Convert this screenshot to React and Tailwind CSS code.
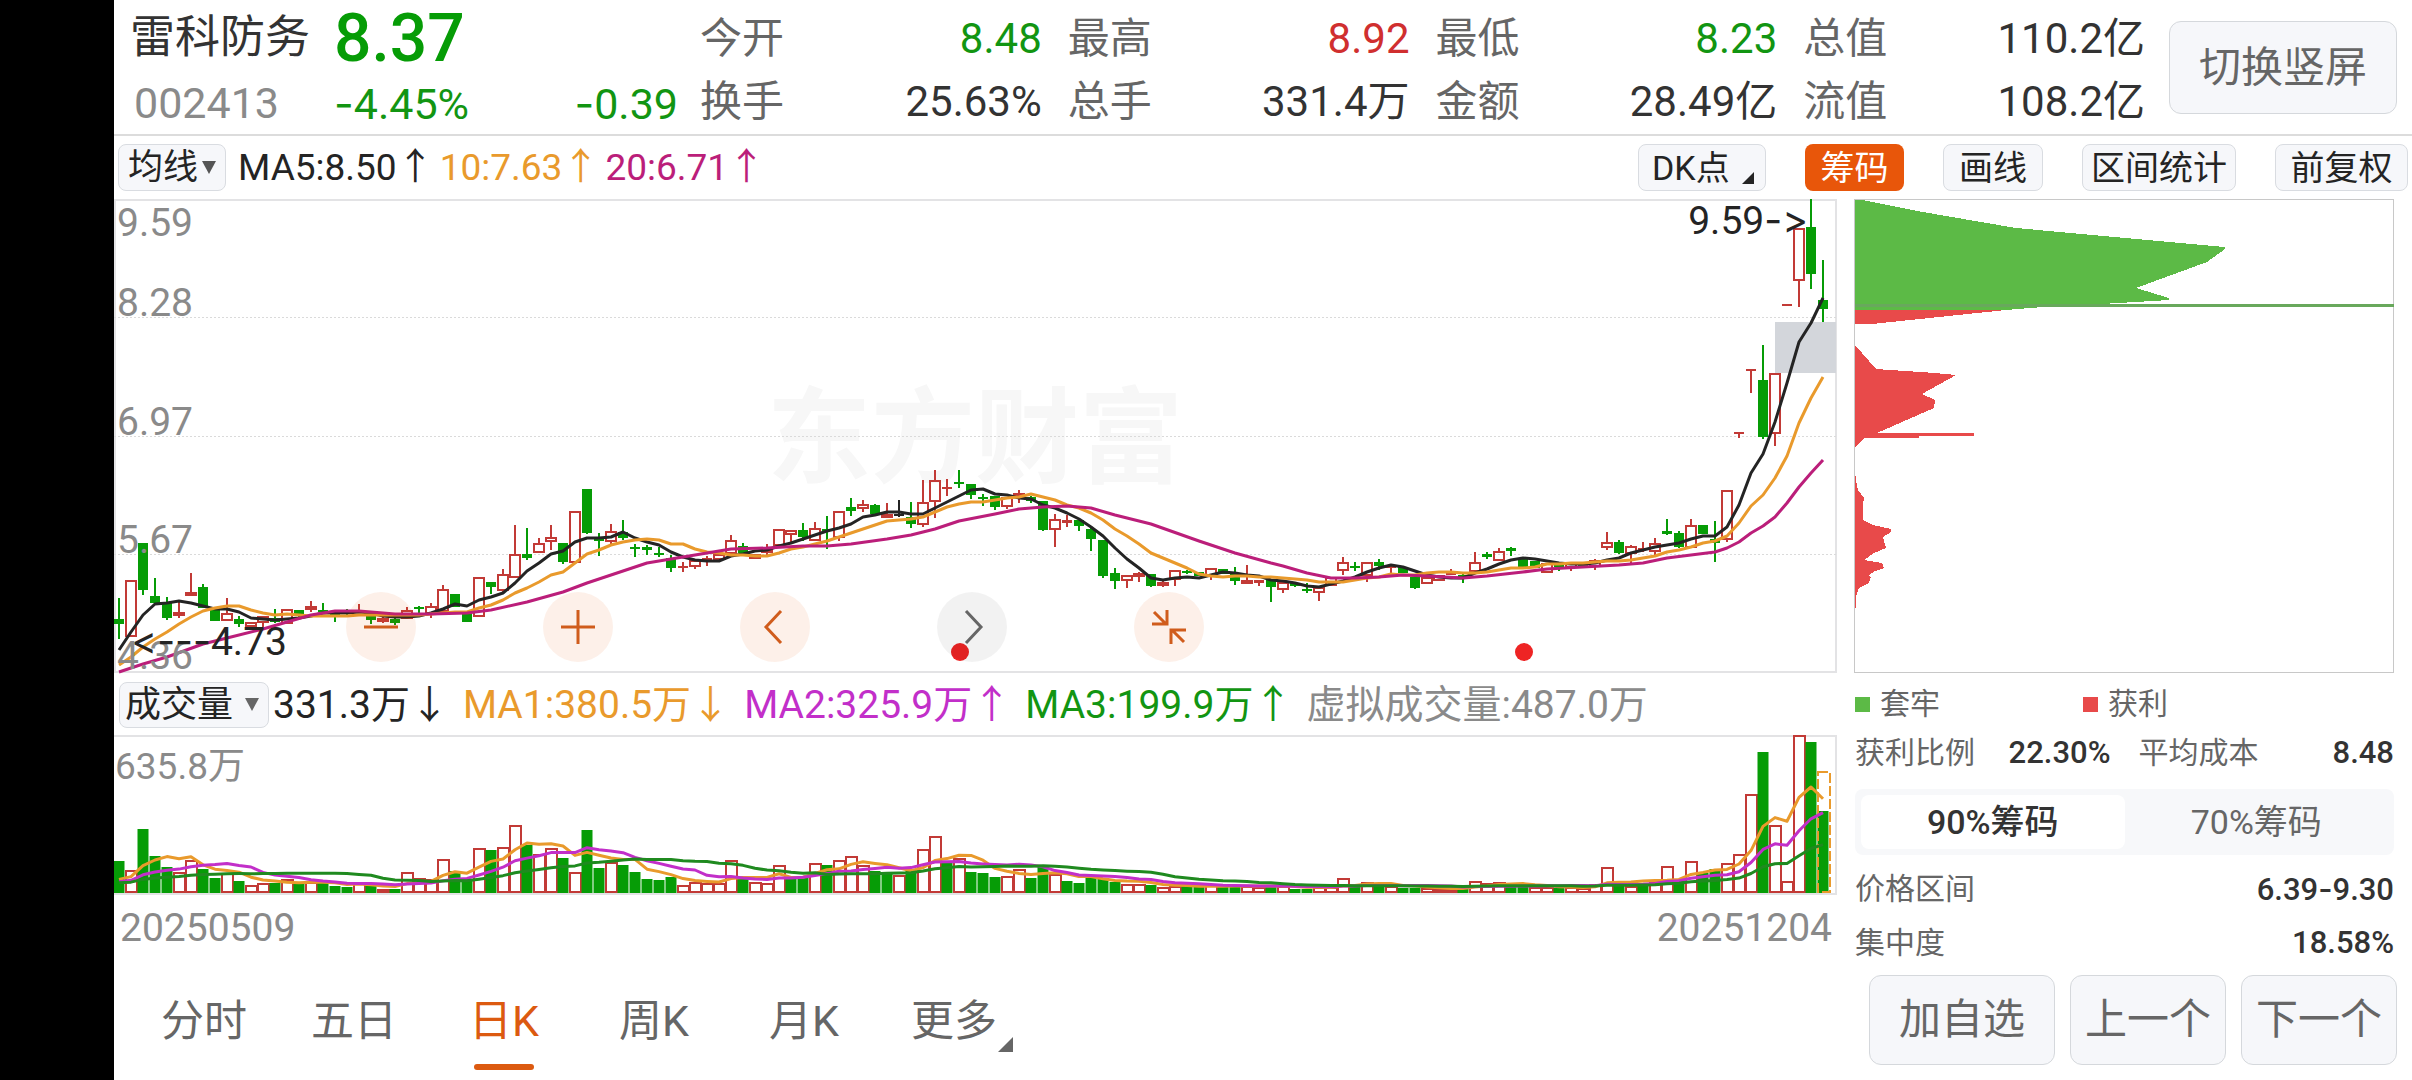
import React from 'react';

const UP = '#c23a36';
const DOWN = '#069c06';
const INK = '#242424';
const ORANGE = '#e99a2c';
const MAGENTA = '#bb1e7a';
const PURPLE = '#c22fc9';

const STEP = 12;
const xOf = (i) => 5 + i * STEP;

// [direction, body top, body bottom, high, low] in chart units
const candles = [
  ['d', 420, 425, 399, 440], ['u', 381, 438, 381, 438], ['d', 344, 391, 344, 396], ['d', 397, 404, 379, 404],
  ['d', 403, 419, 398, 421], ['u', 413, 417, 403, 419], ['u', 393, 397, 374, 397], ['d', 388, 409, 385, 409],
  ['d', 410, 422, 410, 422], ['u', 414, 422, 399, 422], ['d', 420, 425, 417, 428], ['u', 423, 428, 423, 430],
  ['u', 417, 424, 417, 428], ['d', 419, 423, 410, 424], ['u', 410, 425, 410, 425], ['d', 411, 415, 411, 418],
  ['u', 407, 411, 402, 413], ['d', 411, 413, 404, 414], ['d', 415, 417, 412, 423], ['d', 413, 415, 410, 417],
  ['u', 411, 414, 405, 414], ['d', 417, 421, 416, 425], ['u', 419, 423, 417, 424], ['d', 420, 424, 417, 426],
  ['u', 411, 420, 408, 420], ['d', 408, 410, 407, 415], ['u', 407, 415, 404, 419], ['u', 390, 413, 386, 413],
  ['d', 395, 408, 395, 408], ['d', 413, 423, 413, 423], ['u', 378, 418, 378, 418], ['d', 383, 388, 383, 395],
  ['u', 375, 392, 370, 394], ['u', 355, 379, 326, 379], ['d', 355, 359, 329, 361], ['u', 344, 354, 339, 354],
  ['u', 338, 343, 326, 351], ['d', 344, 363, 344, 365], ['u', 312, 364, 312, 364], ['d', 290, 334, 290, 335],
  ['d', 338, 342, 334, 357], ['u', 332, 343, 325, 347], ['d', 333, 339, 321, 341], ['d', 348, 350, 345, 358],
  ['d', 348, 351, 346, 356], ['d', 354, 356, 348, 358], ['d', 359, 369, 356, 373], ['u', 367, 369, 363, 373],
  ['u', 361, 368, 360, 370], ['u', 359, 361, 357, 367], ['u', 355, 361, 355, 361], ['u', 341, 355, 336, 355],
  ['d', 347, 354, 344, 354], ['u', 355, 360, 355, 360], ['u', 350, 354, 345, 356], ['u', 330, 347, 330, 347],
  ['u', 331, 336, 331, 343], ['d', 331, 338, 324, 342], ['u', 329, 342, 323, 342], ['d', 330, 332, 317, 350],
  ['u', 312, 339, 312, 342], ['d', 308, 312, 299, 317], ['u', 305, 310, 301, 313], ['d', 306, 315, 305, 315],
  ['u', 315, 319, 304, 319], ['n', 315, 317, 301, 318], ['d', 318, 325, 303, 329], ['u', 303, 326, 281, 328],
  ['u', 281, 303, 271, 319], ['u', 288, 290, 280, 297], ['d', 283, 285, 271, 289], ['d', 285, 296, 285, 300],
  ['d', 298, 300, 295, 307], ['d', 297, 308, 297, 311], ['u', 298, 308, 298, 310], ['u', 294, 298, 291, 304],
  ['d', 298, 302, 297, 304], ['d', 302, 331, 302, 332], ['u', 320, 331, 315, 348], ['u', 321, 324, 316, 328],
  ['d', 321, 327, 320, 332], ['d', 330, 340, 329, 352], ['d', 341, 377, 341, 379], ['d', 374, 382, 369, 390],
  ['u', 376, 382, 376, 389], ['u', 374, 378, 373, 383], ['d', 375, 387, 375, 388], ['u', 383, 387, 380, 388],
  ['u', 371, 381, 371, 387], ['d', 372, 374, 371, 375], ['d', 373, 377, 373, 377], ['u', 369, 377, 369, 381],
  ['d', 370, 375, 370, 375], ['d', 374, 382, 368, 386], ['u', 381, 385, 366, 385], ['u', 381, 384, 381, 387],
  ['d', 381, 388, 381, 403], ['u', 383, 391, 383, 394], ['d', 384, 387, 384, 388], ['d', 390, 392, 384, 394],
  ['u', 388, 394, 388, 402], ['u', 378, 387, 378, 387], ['u', 363, 372, 358, 376], ['d', 367, 369, 363, 372],
  ['u', 363, 377, 363, 383], ['d', 363, 367, 360, 371], ['u', 367, 369, 365, 375], ['d', 368, 374, 368, 374],
  ['d', 378, 389, 378, 390], ['u', 378, 385, 378, 385], ['u', 376, 382, 376, 382], ['u', 373, 376, 370, 376],
  ['d', 376, 379, 375, 384], ['u', 363, 373, 353, 373], ['d', 355, 358, 353, 360], ['u', 352, 362, 349, 362],
  ['d', 349, 352, 348, 357], ['d', 360, 368, 360, 368], ['d', 362, 369, 362, 369], ['u', 364, 374, 364, 374],
  ['d', 365, 368, 363, 372], ['u', 364, 369, 363, 372], ['d', 363, 367, 363, 367], ['u', 361, 368, 360, 371],
  ['u', 343, 349, 333, 351], ['d', 343, 354, 341, 355], ['u', 347, 355, 346, 364], ['u', 349, 351, 343, 353],
  ['u', 344, 353, 339, 357], ['d', 332, 335, 320, 336], ['d', 334, 348, 332, 349], ['u', 326, 349, 320, 349],
  ['d', 326, 335, 326, 335], ['d', 340, 344, 322, 363], ['u', 291, 341, 291, 343], ['u', 233, 234, 233, 239],
  ['u', 170, 171, 170, 194], ['d', 181, 238, 146, 240], ['u', 174, 235, 174, 247], ['u', 105, 106, 105, 106],
  ['u', 29, 82, 29, 108], ['d', 28, 75, 0, 90], ['d', 101, 110, 61, 123],
];

const ma5 = [
  451, 433, 416, 405, 404, 402, 404, 407, 410, 410, 413, 419, 420, 421, 420, 419, 417, 414, 414, 414,
  413, 414, 417, 418, 418, 417, 414, 410, 405, 407, 401, 398, 394, 384, 372, 364, 355, 352, 343, 339,
  339, 338, 333, 339, 343, 346, 353, 358, 361, 362, 362, 357, 355, 352, 351, 347, 344, 340, 336, 332,
  329, 325, 318, 316, 313, 313, 315, 315, 309, 303, 297, 291, 290, 295, 296, 299, 300, 306, 309, 314,
  320, 328, 337, 349, 360, 369, 379, 381, 379, 378, 379, 376, 373, 374, 376, 377, 381, 382, 384, 387,
  388, 385, 382, 378, 373, 369, 366, 368, 372, 376, 378, 379, 379, 374, 370, 365, 361, 359, 360, 362,
  364, 365, 365, 364, 361, 359, 354, 351, 348, 346, 344, 340, 337, 337, 328, 306, 274, 255, 223, 184,
  143, 124, 99,
];

const ma10 = [
  466, 458, 448, 440, 433, 425, 418, 412, 409, 407, 407, 411, 414, 416, 415, 416, 417, 417, 417, 417,
  416, 416, 416, 416, 416, 416, 415, 414, 413, 413, 409, 406, 401, 394, 389, 383, 376, 373, 364, 355,
  351, 346, 343, 341, 340, 341, 345, 345, 350, 353, 354, 356, 356, 357, 357, 354, 350, 348, 345, 342,
  338, 334, 330, 326, 322, 321, 320, 318, 313, 308, 305, 303, 303, 301, 299, 298, 295, 298, 301, 306,
  309, 314, 321, 330, 337, 345, 354, 359, 364, 369, 375, 377, 378, 377, 377, 378, 378, 379, 380, 381,
  383, 383, 383, 381, 379, 378, 375, 376, 376, 374, 373, 373, 374, 374, 373, 371, 369, 369, 368, 365,
  365, 364, 364, 363, 362, 362, 361, 359, 357, 353, 351, 348, 344, 342, 337, 324, 307, 296, 279, 257,
  224, 199, 178,
];

// [index, value] pairs, the long average is smooth enough for sparse points
const ma20 = [
  [0, 473], [2, 465], [4, 458], [7, 445], [9, 439], [12, 430], [14, 423], [16, 416], [18, 412], [20, 412],
  [23, 415], [26, 415], [29, 414], [31, 411], [34, 403], [37, 393], [39, 384], [42, 372], [44, 364], [46, 360],
  [49, 354], [51, 350], [54, 349], [57, 347], [59, 347], [61, 345], [64, 340], [66, 336], [68, 330], [70, 322],
  [73, 315], [75, 310], [77, 308], [79, 307], [81, 309], [83, 316], [86, 325], [90, 342], [93, 354], [96, 364],
  [97, 367], [99, 374], [101, 379], [103, 379], [105, 378], [107, 376], [109, 377], [112, 379], [114, 377],
  [117, 373], [119, 370], [122, 368], [125, 366], [127, 364], [129, 359], [131, 356], [133, 353], [134, 349],
  [135, 343], [136, 334], [137, 327], [138, 318], [139, 304], [140, 288], [141, 274], [142, 261],
];

// negative = falling day
const volumes = [
  -32, 23, -64, -37, -26, 21, 33, -24, -15, 20, -12, 8, 10, -10, 14, -9, 11, -10, -7, -6,
  11, -7, 4, -4, 21, 15, 14, 34, -22, -14, 45, -43, 46, 68, -48, 39, 45, -35, 21, -63,
  -25, 31, -28, -21, -14, -13, -16, 8, 11, 10, 10, 33, -14, 11, 10, 28, -15, -15, 30, -28,
  33, 37, 28, -22, -21, 18, -22, 44, 57, -31, 35, -21, -20, -16, 17, 24, -15, -26, 19, -12,
  -10, -15, -15, -11, 9, 9, -8, 6, 7, -7, -6, 8, -6, -8, 7, 6, -8, 7, -4, -4,
  6, 6, 15, -7, 11, -8, 7, -5, -5, 5, 4, 4, -5, 12, 10, 11, -7, -7, 6, 6,
  -5, 6, 5, 9, 26, -8, 7, -10, 12, 27, -12, 32, -20, -24, 30, 39, 99, -141, 68, 12,
  158, -151, -82,
];

const VOL_BASE = 158;

function volumeAverage(days) {
  const padded = Array(days).fill(9).concat(volumes.map(Math.abs));
  return volumes.map((_, i) => {
    const slice = padded.slice(i + 1, i + 1 + days);
    return VOL_BASE - slice.reduce((sum, v) => sum + v, 0) / days;
  });
}

const toPoints = (values) => values.map((y, i) => `${xOf(i)},${y}`).join(' ');

function Candle({ index, data }) {
  const [dir, top, bottom, high, low] = data;
  const x = xOf(index);
  const color = dir === 'u' ? UP : dir === 'd' ? DOWN : INK;
  const height = Math.max(bottom - top, 2);
  const hollow = dir === 'u' && height > 3;
  return (
    <g stroke={color} strokeWidth="2" fill={hollow ? 'none' : color}>
      {high < top && <line x1={x} x2={x} y1={high} y2={top} />}
      {low > bottom && <line x1={x} x2={x} y1={bottom} y2={low} />}
      {hollow ? (
        <rect x={x - 5} y={top + 1} width="10" height={height - 2} />
      ) : (
        <rect x={x - 5} y={top} width="10" height={height} stroke="none" />
      )}
    </g>
  );
}

function PriceChart() {
  return (
    <svg viewBox="0 0 1723 475" className="block w-full h-auto" role="img" aria-label="日K">
      <text x="653" y="276" fontSize="104" fontWeight="700" fill="#f7f7f7">东方财富</text>
      <path d="M1 0V474M0 1H1722V473H0" fill="none" stroke="#e3e3e5" strokeWidth="2" />
      {[118.5, 237.5, 355.5].map((y) => (
        <line key={y} x1="0" x2="1722" y1={y} y2={y} stroke="#dadada" strokeDasharray="2 2" />
      ))}
      <rect x="1661" y="123" width="61" height="51" fill="#d3d6db" />
      {candles.map((c, i) => <Candle key={i} index={i} data={c} />)}
      <g fill="none" strokeWidth="3" strokeLinejoin="round">
        <polyline points={toPoints(ma5)} stroke={INK} />
        <polyline points={toPoints(ma10)} stroke={ORANGE} />
        <polyline points={ma20.map(([i, y]) => `${xOf(i)},${y}`).join(' ')} stroke={MAGENTA} />
      </g>
      <g fontSize="39" fill="#8a8a8a">
        <text x="3" y="37">9.59</text>
        <text x="3" y="117">8.28</text>
        <text x="3" y="236">6.97</text>
        <text x="3" y="354">5.67</text>
        <text x="3" y="470">4.36</text>
      </g>
      <g fontSize="39" fill={INK} className="[font-variant-ligatures:none]">
        <text x="1694" y="35" textAnchor="end">
          9.59<tspan className="font-[Inter,sans-serif]">-&gt;</tspan>
        </text>
        <text x="173" y="456" textAnchor="end">
          <tspan className="font-[Inter,sans-serif]">&lt;---</tspan>4.73
        </text>
      </g>
      <circle cx="846" cy="453" r="9" fill="#ee2424" />
      <circle cx="1410" cy="453" r="9" fill="#ee2424" />
    </svg>
  );
}

function VolumeChart() {
  return (
    <svg viewBox="0 0 1723 160" className="block w-full h-auto" role="img" aria-label="成交量">
      <path d="M0 1H1722V159H0" fill="none" stroke="#e3e3e5" strokeWidth="2" />
      <text x="1" y="44" fontSize="37" fill="#8a8a8a">635.8万</text>
      {volumes.map((v, i) => {
        const h = Math.abs(v);
        const x = xOf(i);
        return v < 0 ? (
          <rect key={i} x={x - 5.5} y={VOL_BASE - h} width="11" height={h} fill={DOWN} />
        ) : (
          <rect key={i} x={x - 5} y={VOL_BASE - h + 1} width="11" height={h - 2} fill="#fff" stroke={UP} strokeWidth="2" />
        );
      })}
      <rect x={xOf(142) - 5} y="37" width="12" height="120" fill="none" stroke={ORANGE} strokeWidth="2" strokeDasharray="10 3" />
      <g fill="none" strokeWidth="3" strokeLinejoin="round">
        <polyline points={toPoints(volumeAverage(5))} stroke={ORANGE} />
        <polyline points={toPoints(volumeAverage(10))} stroke={PURPLE} />
        <polyline points={toPoints(volumeAverage(20))} stroke="#1f8a1f" />
      </g>
    </svg>
  );
}

function ChipChart() {
  return (
    <svg viewBox="0 0 541 475" className="block w-full h-auto" role="img" aria-label="筹码">
      <rect x="0.5" y="0.5" width="539" height="473" fill="none" stroke="#c8c8c8" />
      <g shapeRendering="crispEdges">
        <path d="M1 1H9L63 12 162 29 371 48V50L353 63 282 89 315 99V101L265 104 189 108 152 111H1Z" fill="#5cba46" />
        <rect x="1" y="105" width="539" height="3" fill="#68a85c" />
        <path d="M1 111H152L18 125H1Z" fill="#e84a4a" />
        <path d="M1 146 22 170 81 174 102 176 68 195 81 201 80 209 23 234H120V237H65V239H11L7 242 1 248Z" fill="#e84a4a" />
        <path d="M1 273 2 281 4 291 10 299 9 306V321L19 326 37 330V333L29 338 32 349 20 354 10 361 28 364 30 369 21 372 14 377 17 378 15 384 5 389 2 398 1 421Z" fill="#e84a4a" />
      </g>
    </svg>
  );
}

// Inter's hyphen is wide enough to read as a minus or a range dash
function Dash() {
  return <span className="font-[Inter,sans-serif]">-</span>;
}

const stats = [
  { label: '今开', value: '8.48', color: 'text-[#129512]' },
  { label: '最高', value: '8.92', color: 'text-[#d02f2f]' },
  { label: '最低', value: '8.23', color: 'text-[#129512]' },
  { label: '总值', value: '110.2亿', color: 'text-[#333]' },
  { label: '换手', value: '25.63%', color: 'text-[#333]' },
  { label: '总手', value: '331.4万', color: 'text-[#333]' },
  { label: '金额', value: '28.49亿', color: 'text-[#333]' },
  { label: '流值', value: '108.2亿', color: 'text-[#333]' },
];

function Header() {
  return (
    <header className="flex h-[136px] items-center border-b-2 border-[#dcdcdc] pl-4 pr-[15px]">
      <div className="grid w-[560px] grid-cols-[204px_1fr] pt-2 text-[43px] leading-[63px]">
        <h1 className="text-[45px] leading-[63px] text-[#333]">雷科防务</h1>
        <div className="font-[Roboto,sans-serif] text-[66px] font-medium leading-[66px] text-[#069c06]">8.37</div>
        <div className="pl-1 text-[#8a8a8a]">002413</div>
        <div className="flex justify-between pr-3 text-[#129512]">
          <span><Dash />4.45%</span>
          <span><Dash />0.39</span>
        </div>
      </div>
      <dl className="ml-[10px] grid flex-1 grid-cols-4 gap-x-[26px] pt-[6px] text-[42px] leading-[63px]">
        {stats.map((s) => (
          <div key={s.label} className="flex justify-between">
            <dt className="text-[#666]">{s.label}</dt>
            <dd className={s.color}>{s.value}</dd>
          </div>
        ))}
      </dl>
      <button className="ml-6 h-[93px] w-[228px] rounded-xl border border-[#d5d8dc] bg-[#f6f7fa] text-[42px] text-[#666]">
        切换竖屏
      </button>
    </header>
  );
}

function Toolbar() {
  const btn = 'h-[47px] rounded-lg border border-[#d9dce1] bg-[#f6f7fa] text-[34px] leading-[42px] text-[#242424]';
  return (
    <div className="flex h-[63px] items-center justify-between pl-1 pr-1">
      <div className="flex items-center text-[37px] leading-[42px]">
        <button className="flex h-[47px] w-[108px] items-center justify-center gap-1 rounded-lg border border-[#d9dce1] bg-[#f6f7fa] text-[35px] leading-[42px] text-[#242424]">
          均线
          <svg viewBox="0 0 14 13" className="h-[13px] w-[14px]"><path d="M0 0H14L7 13Z" fill="#555" /></svg>
        </button>
        <span className="ml-3 text-[#242424]">MA5:8.50↑</span>
        <span className="ml-1.5 text-[#e99a2c]">10:7.63↑</span>
        <span className="ml-1.5 text-[#bb1e7a]">20:6.71↑</span>
      </div>
      <div className="flex items-center gap-[39px]">
        <button className={`${btn} flex w-[128px] items-center pl-[13px]`}>
          DK点
          <svg viewBox="0 0 12 12" className="ml-3 mt-5 h-3 w-3"><path d="M12 0V12H0Z" fill="#242424" /></svg>
        </button>
        <button className="h-[47px] w-[99px] rounded-lg bg-[#e8560a] text-[34px] leading-[42px] text-white">筹码</button>
        <button className={`${btn} w-[100px]`}>画线</button>
        <button className={`${btn} w-[154px]`}>区间统计</button>
        <button className={`${btn} w-[133px]`}>前复权</button>
      </div>
    </div>
  );
}

function ChartControls() {
  const round = 'flex h-[70px] w-[70px] items-center justify-center rounded-full';
  const icon = { fill: 'none', stroke: '#d05c1c', strokeWidth: 3 };
  return (
    <div className="absolute bottom-[12px] left-[232px] flex gap-[127px]">
      <button aria-label="缩小" className={`${round} bg-[#e8560a]/9`}>
        <svg viewBox="0 0 34 34" className="h-[34px] w-[34px]" {...icon}><path d="M0 17H34" /></svg>
      </button>
      <button aria-label="放大" className={`${round} bg-[#e8560a]/9`}>
        <svg viewBox="0 0 34 34" className="h-[34px] w-[34px]" {...icon}><path d="M0 17H34M17 0V34" /></svg>
      </button>
      <button aria-label="左移" className={`${round} bg-[#e8560a]/9`}>
        <svg viewBox="0 0 34 34" className="h-[34px] w-[34px]" {...icon}><path d="M23 1 8 17 23 33" /></svg>
      </button>
      <button aria-label="右移" className={`${round} bg-black/5`}>
        <svg viewBox="0 0 34 34" className="h-[34px] w-[34px]" {...icon} stroke="#666"><path d="M11 1 26 17 11 33" /></svg>
      </button>
      <button aria-label="收起" className={`${round} bg-[#e8560a]/9`}>
        <svg viewBox="0 0 34 34" className="h-[34px] w-[34px]" {...icon}>
          <path d="M2 2 14 14M15 0V14H0M32 32 20 20M19 34V20H34" />
        </svg>
      </button>
    </div>
  );
}

function VolumeLegend() {
  return (
    <div className="flex h-[61px] items-center pl-[5px] text-[39px] leading-[42px]">
      <button className="flex h-[46px] w-[150px] items-center justify-between rounded-lg border border-[#d9dce1] bg-[#f6f7fa] pl-[5px] pr-[9px] text-[36px] leading-[40px] text-[#242424]">
        成交量
        <svg viewBox="0 0 14 13" className="h-[13px] w-[14px]"><path d="M0 0H14L7 13Z" fill="#666" /></svg>
      </button>
      <span className="ml-1 text-[#242424]">331.3万↓</span>
      <span className="ml-[14px] text-[#e99a2c]">MA1:380.5万↓</span>
      <span className="ml-[14px] text-[#c22fc9]">MA2:325.9万↑</span>
      <span className="ml-[14px] text-[#129512]">MA3:199.9万↑</span>
      <span className="ml-[14px] text-[#8a8a8a]">虚拟成交量:487.0万</span>
    </div>
  );
}

const periods = ['分时', '五日', '日K', '周K', '月K', '更多'];

function PeriodTabs() {
  return (
    <nav className="mt-10 flex pl-[15px] text-[43px] leading-[62px]">
      {periods.map((p) => {
        const active = p === '日K';
        return (
          <button
            key={p}
            className={`flex w-[150px] flex-col items-center ${active ? 'text-[#dc5a10]' : 'text-[#666]'}`}
          >
            <span className="relative">
              {p}
              {p === '更多' && (
                <svg viewBox="0 0 15 15" className="absolute -right-4 bottom-0 h-[15px] w-[15px]">
                  <path d="M15 0V15H0Z" fill="#666" />
                </svg>
              )}
            </span>
            {active && <span className="mt-3 h-[6px] w-[60px] rounded-full bg-[#dc5a10]" />}
          </button>
        );
      })}
    </nav>
  );
}

function ChipPanel() {
  const action = 'h-[90px] rounded-xl border border-[#d5d8dc] bg-[#f6f7fa] text-[42px] text-[#666]';
  return (
    <aside className="flex w-[575px] flex-col pl-[17px] pr-[15px] text-[30px] leading-9 text-[#666]">
      <div className="pr-[2px]">
        <ChipChart />
      </div>
      <div className="mt-3 flex pl-px">
        <div className="flex w-[228px] items-center gap-[10px]">
          <span className="h-[15px] w-[15px] bg-[#5cba46]" />套牢
        </div>
        <div className="flex items-center gap-[10px]">
          <span className="h-[15px] w-[15px] bg-[#e84a4a]" />获利
        </div>
      </div>
      <dl className="ml-px mr-[3px] mt-[13px] grid grid-cols-2 gap-x-7">
        <div className="flex justify-between">
          <dt>获利比例</dt>
          <dd className="text-[31px] font-medium text-[#333]">22.30%</dd>
        </div>
        <div className="flex justify-between">
          <dt>平均成本</dt>
          <dd className="text-[31px] font-medium text-[#333]">8.48</dd>
        </div>
      </dl>
      <div role="tablist" className="ml-px mr-[3px] mt-[18px] flex h-[66px] rounded-lg bg-[#f7f8fa] p-[6px] text-[34px]">
        <button role="tab" aria-selected="true" className="flex-1 rounded-lg bg-white font-medium text-[#333]">90%筹码</button>
        <button role="tab" aria-selected="false" className="flex-1">70%筹码</button>
      </div>
      <dl className="ml-px mr-[3px] mt-4 flex flex-col gap-[17px]">
        <div className="flex justify-between">
          <dt>价格区间</dt>
          <dd className="text-[31px] font-medium text-[#333]">6.39<Dash />9.30</dd>
        </div>
        <div className="flex justify-between">
          <dt>集中度</dt>
          <dd className="text-[31px] font-medium text-[#333]">18.58%</dd>
        </div>
      </dl>
      <div className="mt-[14px] flex justify-end gap-[15px]">
        <button className={`${action} w-[186px]`}>加自选</button>
        <button className={`${action} w-[156px]`}>上一个</button>
        <button className={`${action} w-[156px]`}>下一个</button>
      </div>
    </aside>
  );
}

export default function App() {
  return (
    <div className="flex min-h-screen bg-black font-[Roboto,'Noto_Sans_CJK_SC',sans-serif]">
      <div className="w-[114px] shrink-0" />
      <div className="min-w-0 flex-1 bg-white">
        <Header />
        <Toolbar />
        <div className="flex">
          <main className="min-w-0 flex-1">
            <div className="relative">
              <PriceChart />
              <ChartControls />
            </div>
            <VolumeLegend />
            <VolumeChart />
            <div className="flex justify-between pl-[6px] pr-[5px] pt-[11px] text-[39px] leading-[44px] text-[#8a8a8a]">
              <span>20250509</span>
              <span>20251204</span>
            </div>
            <PeriodTabs />
          </main>
          <ChipPanel />
        </div>
      </div>
    </div>
  );
}
